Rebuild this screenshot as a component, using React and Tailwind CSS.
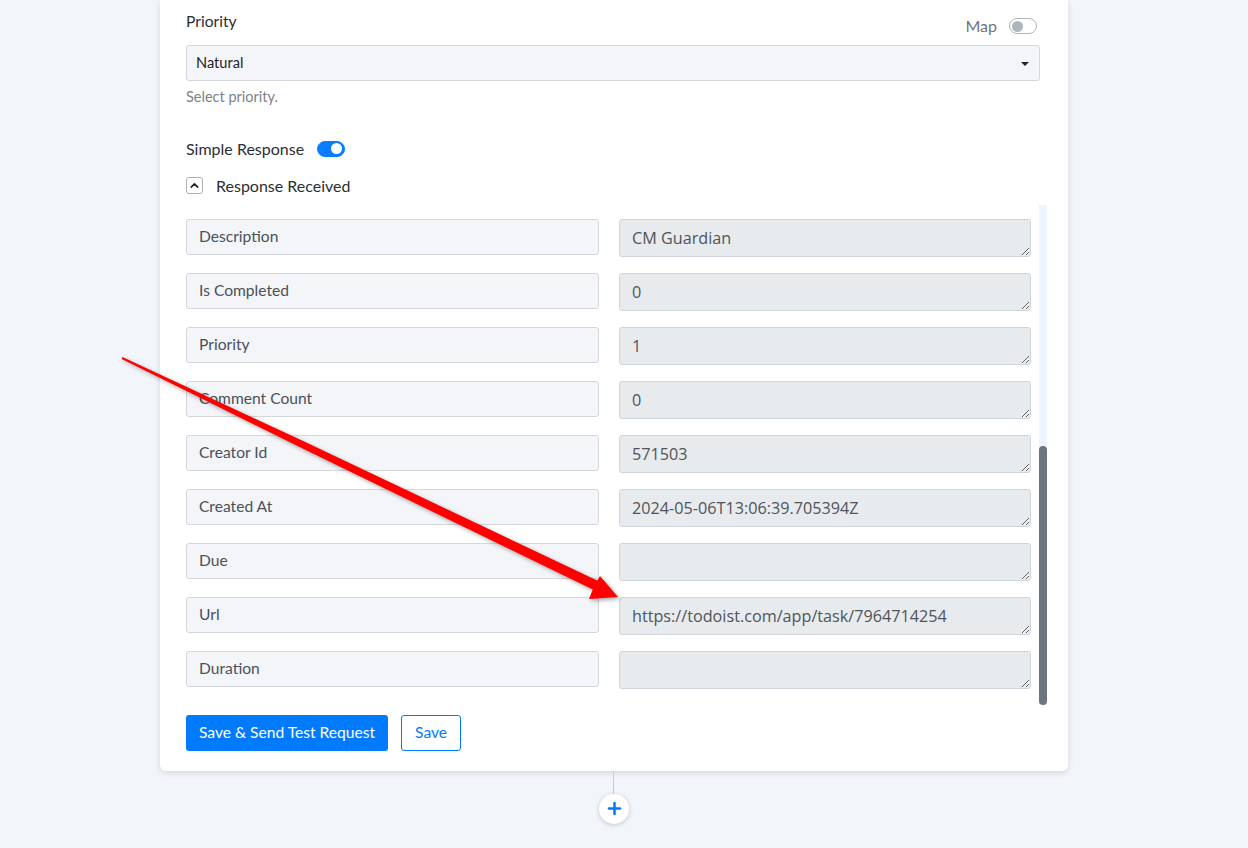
import { ChevronUp, Plus } from "lucide-react";

const rows = [
  { label: "Description", value: "CM Guardian" },
  { label: "Is Completed", value: "0" },
  { label: "Priority", value: "1" },
  { label: "Comment Count", value: "0" },
  { label: "Creator Id", value: "571503" },
  { label: "Created At", value: "2024-05-06T13:06:39.705394Z" },
  { label: "Due", value: "" },
  { label: "Url", value: "https://todoist.com/app/task/7964714254" },
  { label: "Duration", value: "" },
];

const Toggle = ({ on }) => (
  <span
    className={`inline-flex items-center w-[28px] h-[16px] rounded-full border ${
      on ? "bg-[#0a7cff] border-[#0a7cff] justify-end" : "bg-white border-[#adb5bd] justify-start"
    }`}
  >
    <span className={`rounded-full mx-[2px] ${on ? "w-[11px] h-[11px] bg-white" : "w-[11px] h-[11px] bg-[#adb5bd]"}`} />
  </span>
);

const App = () => {
  return (
    <div className="relative min-h-screen w-full bg-[#f2f5f9] overflow-hidden font-['Lato',sans-serif] text-[#2b2f33]">
      <div className="ml-[160px] w-[908px] bg-white rounded-b-md shadow-[0_2px_6px_rgba(0,0,0,0.12)] pl-[26px] pr-[28px] pt-[10px] pb-[20px]">
        <div className="flex justify-between items-start h-[35px]">
          <span className="text-[15.6px] leading-[22px]">Priority</span>
          <div className="flex items-center gap-[12px] mt-[4px] mr-[3px]">
            <span className="text-[16px] text-[#6c757d]">Map</span>
            <Toggle on={false} />
          </div>
        </div>
        <div className="relative h-[36px] bg-[#f3f5f8] border border-[#d3d7dc] rounded-[3px] flex items-center pl-[9px] text-[14.6px] text-[#1f2328]">
          Natural
          <span className="absolute right-[10px] top-[16px] w-0 h-0 border-l-[4px] border-r-[4px] border-t-[4px] border-l-transparent border-r-transparent border-t-[#222]" />
        </div>
        <div className="mt-[5px] text-[14.5px] text-[#7b828a]">Select priority.</div>

        <div className="mt-[29px] flex items-center gap-[13px]">
          <span className="text-[16px]">Simple Response</span>
          <Toggle on={true} />
        </div>
        <div className="mt-[13px] flex items-center gap-[13px]">
          <span className="w-[17px] h-[17px] border border-[#a9b0b8] rounded-[3px] flex items-center justify-center">
            <ChevronUp size={13} strokeWidth={3} className="text-[#222]" />
          </span>
          <span className="text-[16px]">Response Received</span>
        </div>

        <div className="mt-[7px] flex h-[500px] w-[861px]">
          <div className="flex flex-col gap-[16px] pt-[14px] w-[845px]">
            {rows.map((row) => (
              <div key={row.label} className="flex gap-[20px]">
                <div className="w-[413px] h-[36px] bg-[#f3f5f8] border border-[#d3d7dc] rounded-[3px] flex items-center pl-[12px] text-[15.6px] text-[#4a515a]">
                  {row.label}
                </div>
                <textarea
                  readOnly
                  rows={1}
                  value={row.value}
                  className="w-[412px] h-[38px] bg-[#e8ebee] border border-[#cfd4da] rounded-[3px] pl-[12px] pt-[7px] text-[16.2px] leading-[22px] text-[#4f5459] font-['Open_Sans',sans-serif] outline-none overflow-hidden"
                />
              </div>
            ))}
          </div>
          <div className="ml-[8px] w-[8px] h-full bg-[#eef5ff] flex flex-col justify-end">
            <div className="h-[259px] w-full bg-[#6c747d] rounded-full" />
          </div>
        </div>

        <div className="mt-[10px] flex gap-[13px]">
          <button className="h-[36px] px-[13px] bg-[#007bff] text-white text-[15.6px] rounded-[3px]">
            Save &amp; Send Test Request
          </button>
          <button className="h-[36px] px-[13px] bg-white border border-[#007bff] text-[#007bff] text-[15.6px] rounded-[3px]">
            Save
          </button>
        </div>
      </div>

      <div className="ml-[613px] w-[1px] h-[23px] bg-[#c9ced4]" />
      <div className="ml-[599px] w-[30px] h-[30px] rounded-full bg-white shadow-[0_1px_5px_rgba(0,0,0,0.2)] flex items-center justify-center">
        <Plus size={19} strokeWidth={3.2} className="text-[#007bff]" />
      </div>

      {/* annotation arrow */}
      <svg className="absolute left-0 top-0 pointer-events-none drop-shadow-[2px_2px_2px_rgba(0,0,0,0.35)]" width="1248" height="848">
        <polygon
          points="122.4,357.1 200.9,393.6 301.5,440.2 597.2,580.5 600,576 618,597 589,599 592.8,589.5 298.5,446.6 199.1,397.2 121.6,358.9"
          fill="#ff0000"
        />
      </svg>
    </div>
  );
};

export default App;
